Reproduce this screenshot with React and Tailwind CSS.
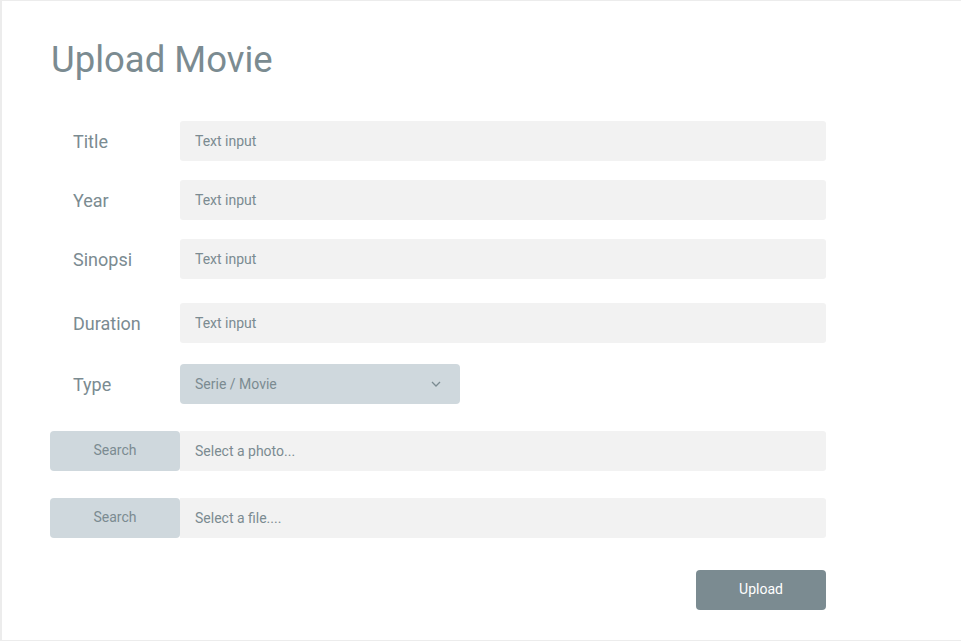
import React from 'react';

const font = { fontFamily: 'Roboto, "Noto Sans", sans-serif' };

function Row({ label, placeholder, className }) {
  return (
    <div className={`flex items-center ${className}`}>
      <label className="w-[130px] pl-[23px] text-[18px] text-[#7b8b91]">{label}</label>
      <input
        className="h-10 w-[646px] rounded-[3px] bg-[#f2f2f2] px-[15px] text-sm text-[#7b8b91] placeholder-[#7b8b91] outline-none"
        placeholder={placeholder}
      />
    </div>
  );
}

function FilePicker({ placeholder, className }) {
  return (
    <div className={`flex ${className}`}>
      <button className="h-10 w-[130px] rounded-[4px] bg-[#cfd8dd] pb-[2px] text-sm text-[#7b8b91]">Search</button>
      <input
        className="h-10 w-[646px] rounded-r-[3px] bg-[#f2f2f2] px-[15px] text-sm text-[#7b8b91] placeholder-[#7b8b91] outline-none"
        placeholder={placeholder}
      />
    </div>
  );
}

export default function App() {
  return (
    <div style={font} className="h-[642px] w-[961px] overflow-hidden bg-white">
      <div className="h-[641px] border-l-2 border-t border-b border-[#ececec] pl-[48px] pt-[37px]">
        <h1 className="ml-[1px] text-[36.5px] leading-[44px] font-normal text-[#7b8b91]">Upload Movie</h1>

        <Row label="Title" placeholder="Text input" className="mt-[39px]" />
        <Row label="Year" placeholder="Text input" className="mt-[19px]" />
        <Row label="Sinopsi" placeholder="Text input" className="mt-[19px]" />
        <Row label="Duration" placeholder="Text input" className="mt-[24px]" />

        <div className="mt-[21px] flex items-center">
          <label className="w-[130px] pl-[23px] text-[18px] text-[#7b8b91]">Type</label>
          <div className="flex h-10 w-[280px] items-center justify-between rounded-[4px] bg-[#cfd8dd] px-[15px] text-sm text-[#7b8b91]">
            <span>Serie / Movie</span>
            <svg width="10" height="6" viewBox="0 0 10 6" fill="none" className="mr-[4px]">
              <path d="M1 1l4 4 4-4" stroke="#7b8b91" strokeWidth="1.3" />
            </svg>
          </div>
        </div>

        <FilePicker placeholder="Select a photo..." className="mt-[27px]" />
        <FilePicker placeholder="Select a file...." className="mt-[27px]" />

        <div className="mt-[32px] flex w-[776px] justify-end">
          <button className="h-10 w-[130px] rounded-[4px] bg-[#7b8b91] pb-[2px] text-sm text-white">Upload</button>
        </div>
      </div>
    </div>
  );
}
